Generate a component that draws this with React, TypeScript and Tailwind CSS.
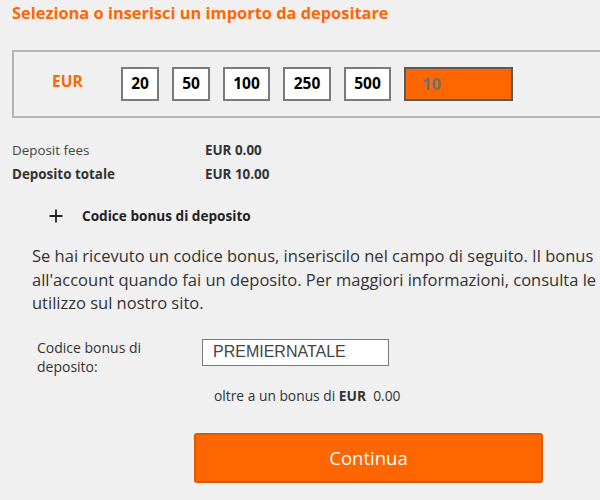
const amounts = ['20', '50', '100', '250', '500'];

const widths: Record<string, string> = {
  '20': 'w-[38px]',
  '50': 'w-[38px]',
  '100': 'w-[47px]',
  '250': 'w-[48px]',
  '500': 'w-[47px]',
};

export default function App() {
  return (
    <div className="w-[600px] h-[500px] overflow-hidden bg-[#f0f0f0] font-['Open_Sans',sans-serif] text-[#333]">
      <div className="w-[720px]">
        {/* Titolo */}
        <h1 className="pt-[3px] pl-3 text-[16.4px] leading-[20px] font-bold text-[#ff6600]">
          Seleziona o inserisci un importo da depositare
        </h1>

        {/* Importi */}
        <div className="mt-[27px] ml-3 h-[68px] border-2 border-[#b4b4b4] flex items-center">
          <span className="ml-[38px] mb-[5px] w-[69px] text-[15.5px] font-bold text-[#ff6600]">EUR</span>
          <div className="flex gap-[13px]">
            {amounts.map((a) => (
              <div
                key={a}
                className={`${widths[a]} h-[34px] bg-white border-2 border-[#7a7a7a] flex items-center justify-center text-[15.5px] font-bold text-black`}
              >
                {a}
              </div>
            ))}
            <div className="w-[109px] h-[34px] bg-[#ff6600] border-2 border-[#5a5a5a] flex items-center pl-[16px] text-[16.5px] font-bold text-[#6f6f6f]">
              10
            </div>
          </div>
        </div>

        {/* Riepilogo */}
        <div className="mt-5 pl-3 text-[13.4px]">
          <div className="h-6 leading-6 flex">
            <span className="w-[193px] text-[#444]">Deposit fees</span>
            <span className="font-bold">EUR 0.00</span>
          </div>
          <div className="h-6 leading-6 flex">
            <span className="w-[193px] font-bold">Deposito totale</span>
            <span className="font-bold">EUR 10.00</span>
          </div>
        </div>

        {/* Codice bonus */}
        <div className="mt-[18px] h-6 flex items-center pl-[49px] text-[13.6px] font-bold text-[#222]">
          <svg width="14" height="14" viewBox="0 0 14 14" className="mr-[19px]">
            <path d="M7 0.5v13M0.5 7h13" stroke="#222" strokeWidth="1.8" fill="none" />
          </svg>
          Codice bonus di deposito
        </div>

        <p className="mt-4 pl-8 text-[16.5px] leading-[23.5px] whitespace-nowrap">
          Se hai ricevuto un codice bonus, inseriscilo nel campo di seguito. Il bonus
          <br />
          all'account quando fai un deposito. Per maggiori informazioni, consulta le
          <br />
          utilizzo sul nostro sito.
        </p>

        <div className="mt-[24px] flex items-start">
          <label className="ml-[37px] w-[165px] text-[14px] leading-[19px] -mt-[1px]">
            Codice bonus di
            <br />
            deposito:
          </label>
          <div className="w-[187px] h-[27px] bg-white border border-[#7a7a7a] flex items-center pl-[10px] font-['Liberation_Sans',sans-serif] text-[16px] text-[#444]">
            PREMIERNATALE
          </div>
        </div>

        <div className="mt-[10px] pl-[214px] text-[13.8px] leading-[20px]">
          oltre a un bonus di <span className="font-bold">EUR</span>&nbsp; 0.00
        </div>

        <button className="mt-[27px] ml-[194px] w-[349px] h-[50px] rounded-[3px] bg-[#ff6600] border-2 border-[#d95a00] text-white text-[18.5px] font-['Open_Sans',sans-serif]">
          Continua
        </button>
      </div>
    </div>
  );
}
